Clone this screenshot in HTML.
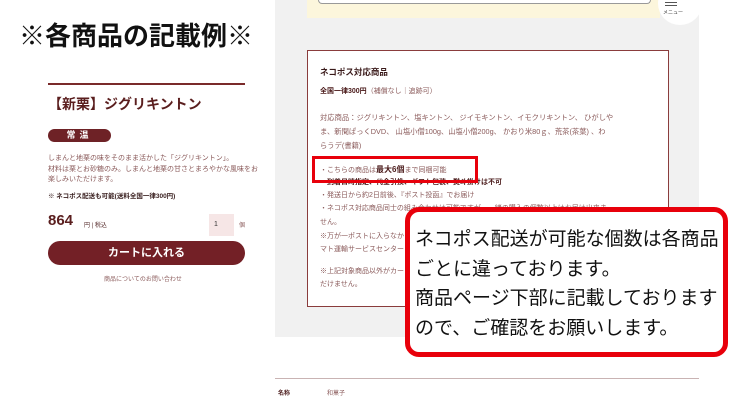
<!DOCTYPE html>
<html><head><meta charset="utf-8"><style>
*{margin:0;padding:0;box-sizing:border-box}
body{width:754px;height:400px;position:relative;background:#fff;font-family:"Liberation Sans","Noto Sans CJK JP",sans-serif;overflow:hidden}
.a{position:absolute;white-space:nowrap}
.dr{color:#6b2a2a}
.t{color:#8a5a5a;font-size:7px}
</style></head><body>
<div class="a" style="left:19px;top:16px;font-size:26px;font-weight:bold;color:#111">※各商品の記載例※</div>
<div class="a" style="left:48px;top:83px;width:197px;height:2px;background:#7a2a2a"></div>
<div class="a dr" style="left:48px;top:94px;font-size:14px;font-weight:bold;color:#5a1e1e">【新栗】ジグリキントン</div>
<div class="a" style="left:48px;top:129px;width:63px;height:13px;border-radius:7px;background:#6e2226;color:#fff;font-size:9px;font-weight:bold;text-align:center;line-height:13px;letter-spacing:4px">常温</div>
<div class="a t" style="left:48px;top:154px;line-height:10.5px">しまんと地栗の味をそのまま活かした「ジグリキントン」。<br>材料は栗とお砂糖のみ。しまんと地栗の甘さとまろやかな風味をお<br>楽しみいただけます。</div>
<div class="a" style="left:48px;top:190px;font-size:6.5px;font-weight:bold;color:#3a2020">※ ネコポス配送も可能(送料全国一律300円)</div>
<div class="a" style="left:48px;top:212px;font-size:15px;font-weight:bold;color:#5a1e1e">864</div>
<div class="a" style="left:84px;top:220px;font-size:6px;color:#5a3030">円 | 税込</div>
<div class="a" style="left:209px;top:214px;width:25px;height:22px;background:#f6e6e6;font-size:7px;line-height:22px;padding-left:5px;color:#333">1</div>
<div class="a" style="left:239px;top:220px;font-size:6px;color:#8a5a5a">個</div>
<div class="a" style="left:48px;top:241px;width:197px;height:24px;border-radius:12px;background:#732026;color:#fff;font-size:11px;font-weight:bold;text-align:center;line-height:24px">カートに入れる</div>
<div class="a t" style="left:104px;top:274px;font-size:6px">商品についてのお問い合わせ</div>

<div class="a" style="left:275px;top:0;width:424px;height:337px;background:#f1f1f1"></div>
<div class="a" style="left:307px;top:0;width:353px;height:18px;background:#fcf6dc"></div>
<div class="a" style="left:318px;top:0;width:333px;height:4px;border:1px solid #999;border-top:none;border-radius:0 0 4px 4px;background:#fff"></div>
<div class="a" style="left:658px;top:-18px;width:44px;height:43px;border-radius:50%;background:#fff"></div>
<div class="a" style="left:665px;top:2px;width:12px;height:1px;background:#555"></div>
<div class="a" style="left:665px;top:5px;width:12px;height:1px;background:#555"></div>
<div class="a" style="left:663px;top:9px;font-size:5px;color:#333">メニュー</div>

<div class="a" style="left:307px;top:50px;width:362px;height:257px;border:1.5px solid #8a3c3c;background:#fff"></div>
<div class="a" style="left:320px;top:66px;font-size:8.5px;font-weight:bold;color:#3a1a1a">ネコポス対応商品</div>
<div class="a" style="left:320px;top:86px;font-size:7px;color:#8a5a5a"><b style="color:#4a1a1a">全国一律300円</b>（補償なし｜追跡可）</div>
<div class="a t" style="left:320px;top:111px;line-height:14px;font-size:7.3px">対応商品：ジグリキントン、塩キントン、 ジイモキントン、イモクリキントン、 ひがしや<br>ま、新聞ぱっくDVD、 山塩小僧100g、山塩小僧200g、 かおり米80ｇ、荒茶(茶葉) 、わ<br>らうデ(書籍)</div>
<div class="a t" style="left:320px;top:164px">・こちらの商品は<b style="color:#4a1a1a;font-size:8px">最大6個</b>まで同梱可能</div>
<div class="a t" style="left:320px;top:177px;font-weight:bold;color:#4a1a1a">・到着日時指定、代金引換、ギフト包装、熨斗掛けは不可</div>
<div class="a t" style="left:320px;top:190px">・発送日から約2日前後、『ポスト投函』でお届け</div>
<div class="a t" style="left:320px;top:203px">・ネコポス対応商品同士の組み合わせは可能ですが、一緒の購入の個数以上はお届け出来ま</div>
<div class="a t" style="left:320px;top:217px">せん。</div>
<div class="a t" style="left:320px;top:231px">※万が一ポストに入らなかった場合は</div>
<div class="a t" style="left:320px;top:244px">マト運輸サービスセンター</div>
<div class="a t" style="left:320px;top:266px">※上記対象商品以外がカー</div>
<div class="a t" style="left:320px;top:279px">だけません。</div>

<div class="a" style="left:312px;top:156px;width:166px;height:27px;border:3px solid #e8000b"></div>

<div class="a" style="left:405px;top:207px;width:323px;height:150px;border:5px solid #e8000b;border-radius:14px;background:#fff"></div>
<div class="a" style="left:415px;top:225px;font-size:19px;line-height:29.5px;color:#111">ネコポス配送が可能な個数は各商品<br>ごとに違っております。<br>商品ページ下部に記載しております<br>ので、ご確認をお願いします。</div>

<div class="a" style="left:275px;top:378px;width:424px;height:1px;background:#c9b3b3"></div>
<div class="a" style="left:278px;top:388px;font-size:6px;font-weight:bold;color:#4a1a1a">名称</div>
<div class="a" style="left:327px;top:388px;font-size:6px;color:#8a5a5a">和菓子</div>
</body></html>
